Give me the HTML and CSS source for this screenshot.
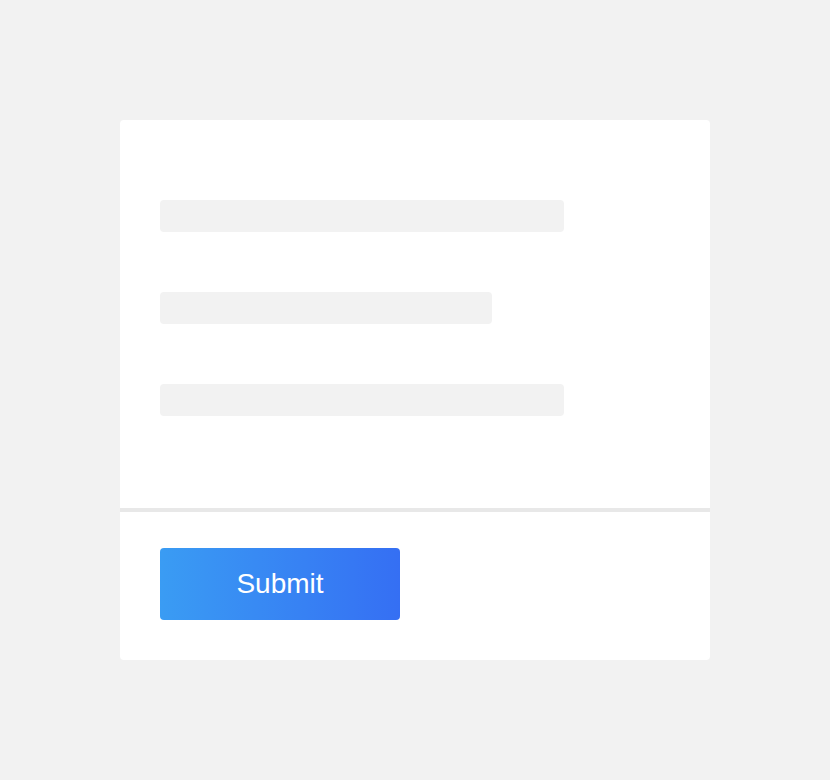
FILE: index.html
```html
<!DOCTYPE html>
<html>
<head>
<meta charset="utf-8">
<link rel="stylesheet" href="styles.css">
</head>
<body>
<div class="page">
  <div class="card">
    <div class="card-body">
      <div class="bar bar-long"></div>
      <div class="bar bar-short"></div>
      <div class="bar bar-long"></div>
    </div>
    <div class="card-footer">
      <button class="submit">Submit</button>
    </div>
  </div>
</div>
</body>
</html>
```
FILE: styles.css
```css
html, body {
  margin: 0;
  padding: 0;
  background: #f2f2f2;
  font-family: "Liberation Sans", Arial, sans-serif;
}
.page {
  padding: 120px 120px;
}
.card {
  width: 590px;
  background: #ffffff;
  border-radius: 4px;
}
.card-body {
  padding: 80px 40px 92px;
  display: flex;
  flex-direction: column;
  gap: 60px;
  border-bottom: 4px solid #e8e8e8;
}
.bar {
  height: 32px;
  background: #f2f2f2;
  border-radius: 4px;
}
.bar-long { width: 404px; }
.bar-short { width: 332px; }
.card-footer {
  padding: 36px 40px 40px;
}
.submit {
  display: block;
  width: 240px;
  height: 72px;
  border: none;
  border-radius: 4px;
  background: linear-gradient(90deg, #3a9cf3 0%, #356ff3 100%);
  color: #ffffff;
  font-family: "Liberation Sans", Arial, sans-serif;
  font-size: 28px;
  padding: 0;
}
```
